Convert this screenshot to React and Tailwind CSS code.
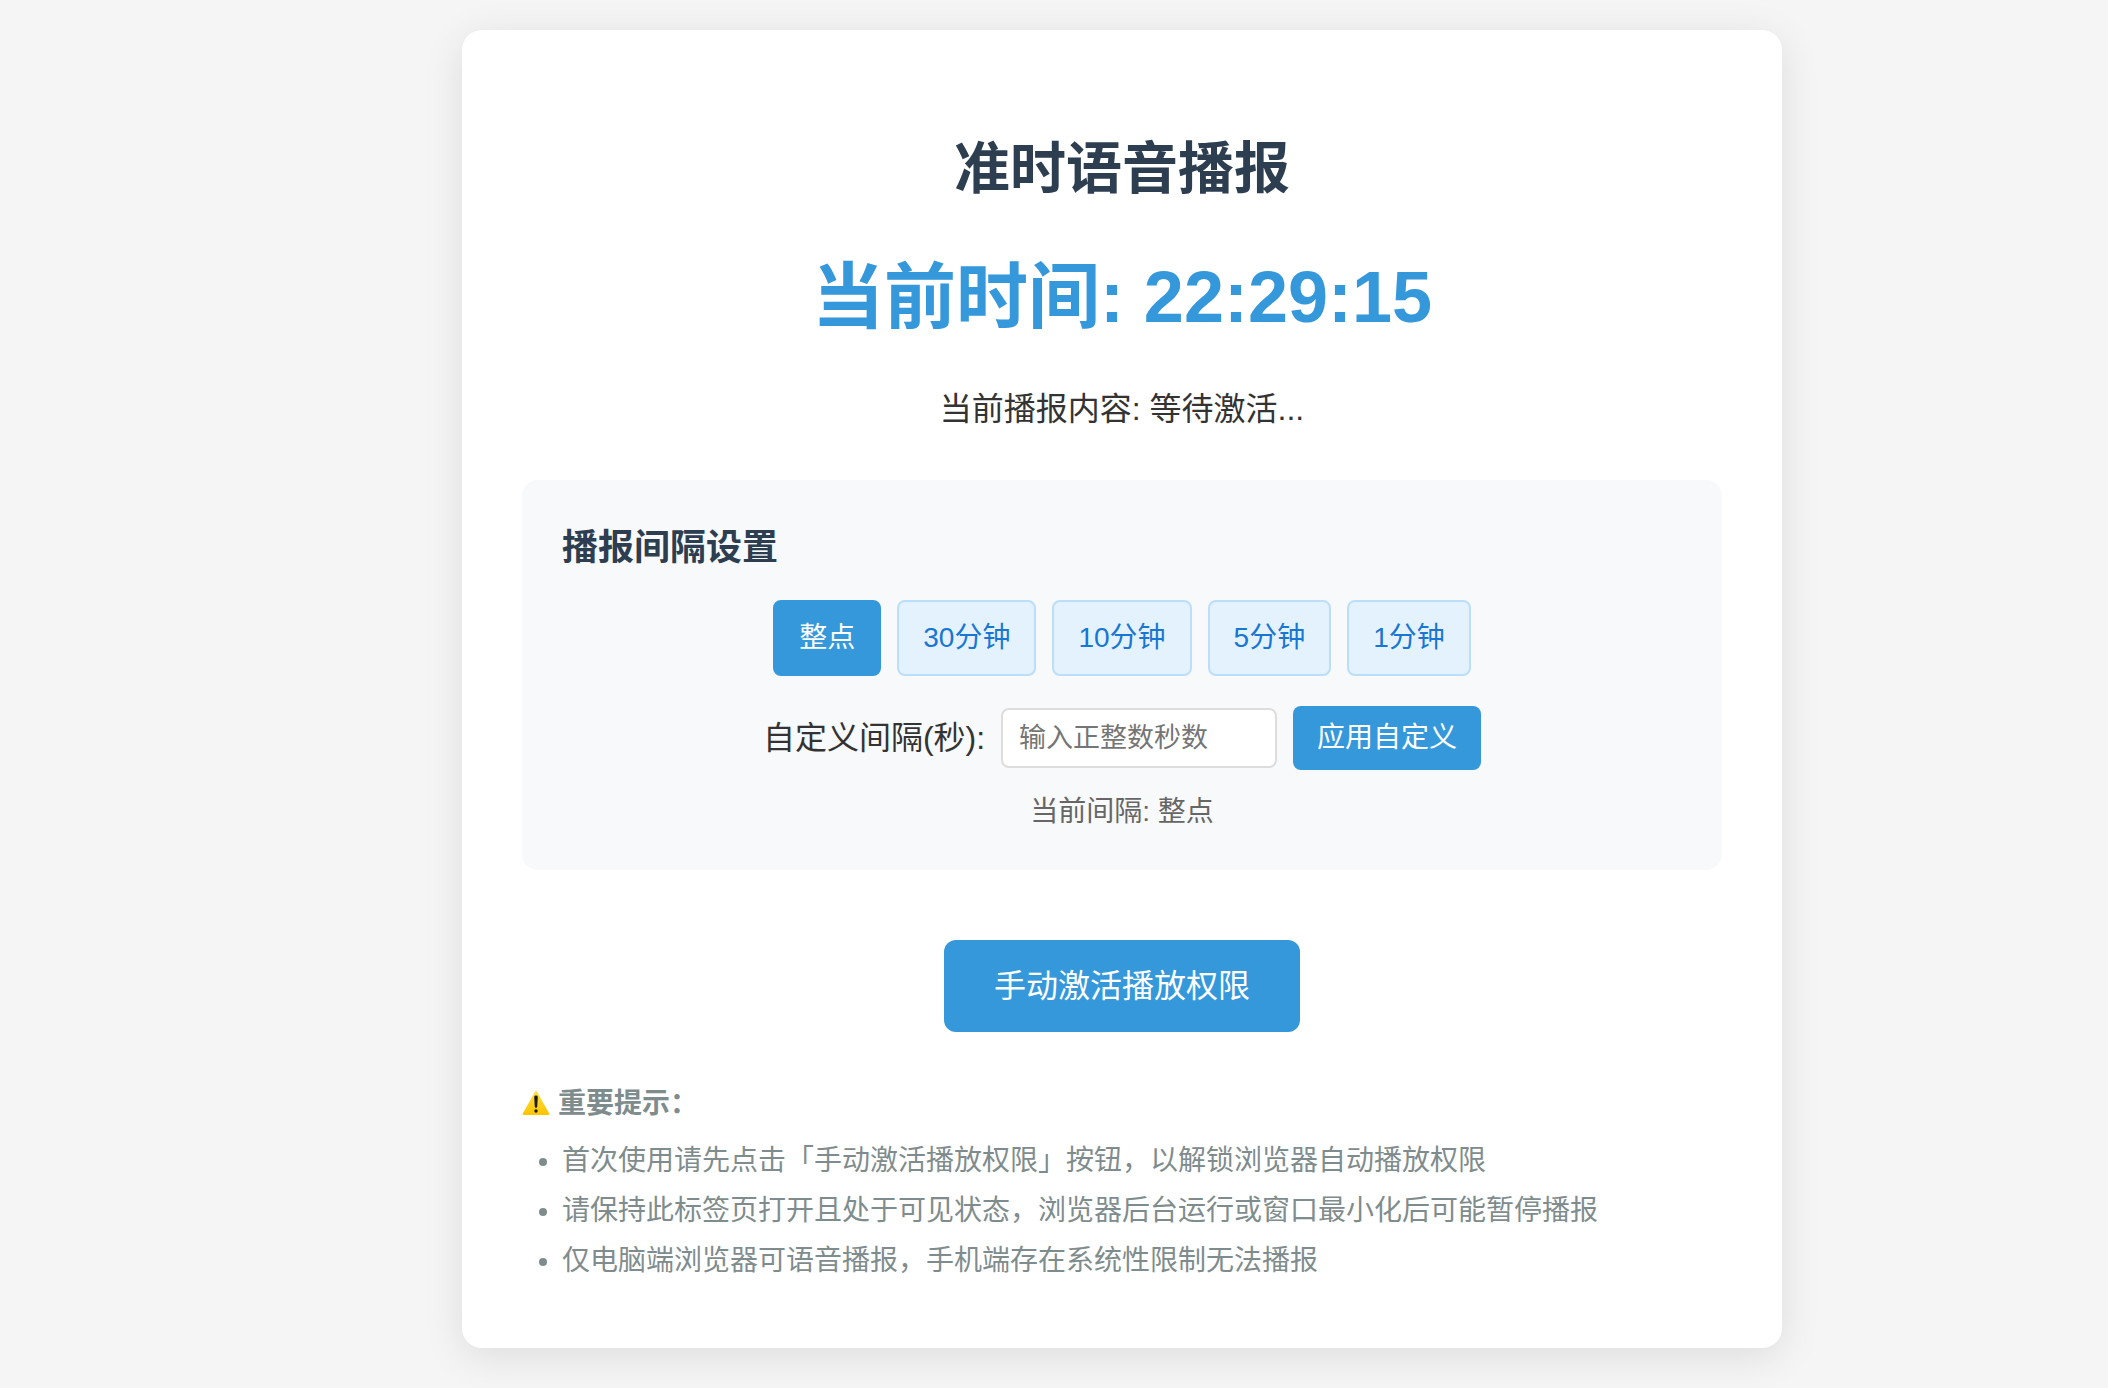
import { useState } from 'react'

const INTERVALS = ['整点', '30分钟', '10分钟', '5分钟', '1分钟']

const NOTES = [
  '首次使用请先点击「手动激活播放权限」按钮，以解锁浏览器自动播放权限',
  '请保持此标签页打开且处于可见状态，浏览器后台运行或窗口最小化后可能暂停播报',
  '仅电脑端浏览器可语音播报，手机端存在系统性限制无法播报',
]

export default function App() {
  const [current, setCurrent] = useState('整点')
  const [custom, setCustom] = useState('')

  const applyCustom = () => {
    const seconds = parseInt(custom, 10)
    if (seconds > 0) setCurrent(`${seconds}秒`)
  }

  return (
    <div
      lang="zh-CN"
      className="min-h-screen bg-[#f5f5f5] py-[30px] pr-5 pl-[156px] text-[32px] leading-[52px] text-[#333]
                 font-['Liberation_Sans','Noto_Sans_CJK_SC',sans-serif]"
    >
      <main className="mx-auto max-w-[1320px] rounded-[20px] bg-white px-[60px] pt-[94px] pb-[65px] text-center shadow-[0_8px_40px_rgba(0,0,0,0.1)]">
        <h1 className="text-[56px] leading-[90px] font-bold text-[#2c3e50]">准时语音播报</h1>
        <div className="mt-[25px] text-[72px] leading-[116px] font-bold text-[#3498db]">当前时间: 22:29:15</div>
        <p className="mt-7">当前播报内容: 等待激活...</p>

        {/* Interval settings */}
        <section className="mt-[45px] rounded-2xl bg-[#f8f9fa] px-10 pt-11 pb-9">
          <h3 className="text-left text-[36px] leading-[48px] font-bold text-[#2c3e50]">播报间隔设置</h3>

          <div className="mt-7 flex flex-wrap justify-center gap-4">
            {INTERVALS.map((label) => (
              <IntervalButton
                key={label}
                label={label}
                active={label === current}
                onClick={() => setCurrent(label)}
              />
            ))}
          </div>

          <div className="mt-[30px] flex flex-wrap items-center justify-center gap-4">
            <label htmlFor="custom-interval">自定义间隔(秒):</label>
            <input
              id="custom-interval"
              type="text"
              inputMode="numeric"
              value={custom}
              onChange={(e) => setCustom(e.target.value)}
              placeholder="输入正整数秒数"
              className="h-[60px] w-[276px] rounded-lg border-2 border-[#ddd] bg-white px-4 text-[27px] leading-8 placeholder:text-[#757575]"
            />
            <button
              type="button"
              onClick={applyCustom}
              className="h-16 rounded-lg bg-[#3498db] px-6 text-[28px] text-white"
            >
              应用自定义
            </button>
          </div>

          <p className="mt-5 text-[28px] leading-[44px] text-[#666]">当前间隔: {current}</p>
        </section>

        <button
          type="button"
          className="mt-[70px] rounded-xl bg-[#3498db] px-[50px] py-5 text-white"
        >
          手动激活播放权限
        </button>

        {/* Notes */}
        <div className="mt-[50px] text-left text-[28px] leading-[44px] text-[#7f8c8d]">
          <p className="flex items-center gap-2 font-bold">
            <WarningIcon />
            重要提示：
          </p>
          <ul className="mt-[13px] list-disc space-y-[6px] pl-10">
            {NOTES.map((note) => (
              <li key={note}>{note}</li>
            ))}
          </ul>
        </div>
      </main>
    </div>
  )
}

function IntervalButton({ label, active, onClick }) {
  return (
    <button
      type="button"
      aria-pressed={active}
      onClick={onClick}
      className={`h-[76px] rounded-lg border-2 px-6 text-[28px]
        ${active ? 'border-[#3498db] bg-[#3498db] text-white' : 'border-[#bbdefb] bg-[#e3f2fd] text-[#1976d2]'}`}
    >
      {label}
    </button>
  )
}

function WarningIcon() {
  return (
    <svg viewBox="0 0 28 28" className="size-7" aria-hidden="true">
      <defs>
        <linearGradient id="warn" x1="0" y1="0" x2="0" y2="1">
          <stop offset="0" stopColor="#fde04a" />
          <stop offset="1" stopColor="#fdc400" />
        </linearGradient>
      </defs>
      <path d="M13.1 1.5Q14 0 14.9 1.5L27.2 23.4Q28 25 26.4 25H1.6Q0 25 .8 23.4Z" fill="url(#warn)" />
      <path d="M12.2 7Q12.2 5.6 14 5.6T15.8 7L15.2 16.8Q15.1 17.8 14 17.8T12.8 16.8Z" fill="#1d1a10" />
      <circle cx="14" cy="21" r="1.7" fill="#1d1a10" />
    </svg>
  )
}
